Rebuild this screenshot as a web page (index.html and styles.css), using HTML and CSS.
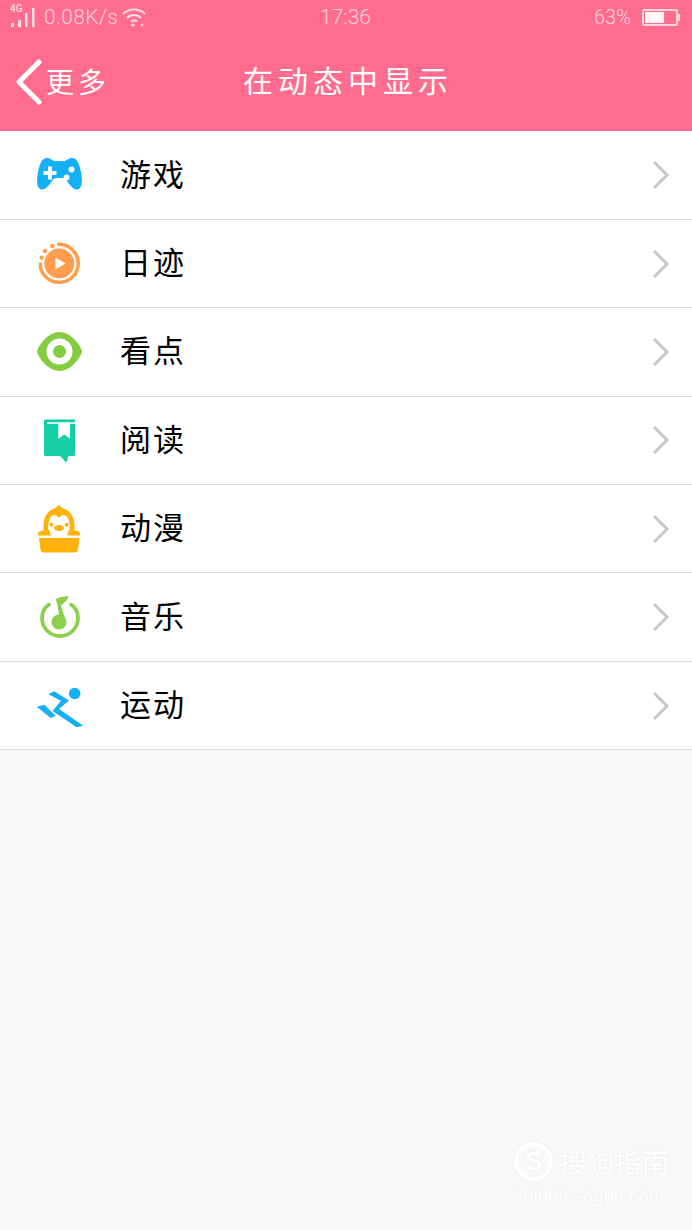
FILE: index.html
```html
<!DOCTYPE html>
<html>
  <head>
    <meta charset="utf-8">
    <title>在动态中显示</title>
    <link rel="stylesheet" href="styles.css">
  </head>
  <body>
    <header class="top">
      <div class="status">
        <div class="status-left">
          <span class="net">4G</span>
          <svg class="signal" width="25" height="19" viewBox="0 0 25 19">
            <rect x="1" y="15" width="3" height="4" fill="#ffe0e8"/>
            <rect x="8" y="12" width="3" height="7" fill="#ffe0e8"/>
            <rect x="15" y="5" width="2.500" height="14" fill="#ffe0e8"/>
            <rect x="22" y="0" width="2.500" height="19" fill="#ffe0e8"/>
          </svg>
          <span class="speed">0.08K/s</span>
          <svg class="wifi" width="24" height="20" viewBox="0 0 24 20" fill="none" stroke="#ffe0e8" stroke-width="2">
            <path d="M1 7C7 1 17 1 23 7"/>
            <path d="M5 11C9 7 15 7 19 11"/>
            <path d="M9 14.500C11 13 13 13 15 14.500"/>
            <circle cx="11" cy="18" r="1.600" fill="#ffe0e8" stroke="none"/>
            <circle cx="20" cy="18" r="1.300" fill="#ffe0e8" stroke="none"/>
          </svg>
        </div>
        <div class="clock">17:36</div>
        <div class="status-right">
          <span class="percent">63%</span>
          <div class="battery"><div class="battery-level"></div></div>
          <div class="battery-tip"></div>
        </div>
      </div>
      <div class="nav">
        <div class="back">
          <svg width="28" height="46" viewBox="0 0 28 46" fill="none" stroke="#fff" stroke-width="5" stroke-linecap="round" stroke-linejoin="round">
            <path d="M24 3L4 23L24 43"/>
          </svg>
          <span>更多</span>
        </div>
        <h1 class="title">在动态中显示</h1>
      </div>
    </header>

    <ul class="list">
      <li class="row">
        <svg class="icon" width="48" height="48" viewBox="0 0 48 48">
          <path fill="#14b0f5" d="M11 7C14 7 16 9 18 10H29C31 9 33 7 36 7C41 7 43 12 45 21C46 28 47 35 43 38C39 40 35 36 31 30C30 28 28 27 26 27H21C19 27 17 28 16 30C12 36 8 40 4 38C0 35 1 28 2 21C4 12 6 7 11 7Z"/>
          <path fill="#fff" d="M12 15.500H16V20H20.500V24H16V28.500H12V24H7.500V20H12Z"/>
          <circle cx="35.500" cy="18.500" r="3" fill="#fff"/>
          <circle cx="30.500" cy="26.500" r="3" fill="#fff"/>
        </svg>
        <span class="label">游戏</span>
        <svg class="arrow" width="18" height="30" viewBox="0 0 18 30" fill="none" stroke="#c8c8c8" stroke-width="3"><path d="M2 2L15 15L2 28"/></svg>
      </li>
      <li class="row">
        <svg class="icon" width="48" height="48" viewBox="0 0 48 48">
          <circle cx="23.300" cy="23.500" r="15" fill="#ff9d4f"/>
          <path fill="#fff" d="M19.500 17.500L29.500 23.500L19.500 29.500Z"/>
          <path fill="none" stroke="#ff9d4f" stroke-width="3.500" stroke-linecap="round" d="M22.500 4.300C33 4 42.300 12.500 42.300 23.300C42.300 34 33.800 42.300 23.300 42.300C12.800 42.300 4.300 34 4.300 24"/>
          <circle cx="16.300" cy="6" r="2.200" fill="#ff9d4f"/>
          <circle cx="9" cy="11" r="2.200" fill="#ff9d4f"/>
          <circle cx="5.700" cy="17.700" r="2.200" fill="#ff9d4f"/>
        </svg>
        <span class="label">日迹</span>
        <svg class="arrow" width="18" height="30" viewBox="0 0 18 30" fill="none" stroke="#c8c8c8" stroke-width="3"><path d="M2 2L15 15L2 28"/></svg>
      </li>
      <li class="row">
        <svg class="icon" width="48" height="48" viewBox="0 0 48 48">
          <path fill="#84cc40" d="M1 23.500C1 20 11 4 23.500 4C36 4 46 20 46 23.500C46 27 36 43 23.500 43C11 43 1 27 1 23.500Z"/>
          <circle cx="23.500" cy="23.500" r="13" fill="#fff"/>
          <circle cx="23.500" cy="23.500" r="6.500" fill="#84cc40"/>
        </svg>
        <span class="label">看点</span>
        <svg class="arrow" width="18" height="30" viewBox="0 0 18 30" fill="none" stroke="#c8c8c8" stroke-width="3"><path d="M2 2L15 15L2 28"/></svg>
      </li>
      <li class="row">
        <svg class="icon" width="48" height="48" viewBox="0 0 48 48">
          <path fill="#14cfa5" d="M9.500 3.500H39V38.500Q39 40 37.500 40H32.300L30.500 46.800L24 40H9.500Q8 40 8 38.500V5Q8 3.500 9.500 3.500Z"/>
          <path fill="#fff" d="M11 6.200H39V7.800H34V22.800L28.300 18.500L22.300 22.800V7.800H11Z"/>
        </svg>
        <span class="label">阅读</span>
        <svg class="arrow" width="18" height="30" viewBox="0 0 18 30" fill="none" stroke="#c8c8c8" stroke-width="3"><path d="M2 2L15 15L2 28"/></svg>
      </li>
      <li class="row">
        <svg class="icon" width="48" height="48" viewBox="0 0 48 48">
          <path fill="#ffb20c" d="M22.800 -0.300L26 3C33 4.500 38 11 38.500 19V28H7.500V19C8 11 13 4.500 19.500 3Z"/>
          <path fill="#fff" d="M12 31C11.500 19 13 10.500 18 10C20 10 21.500 12 23 12.500C24.500 12 26 10 28 10C33 10.500 34.500 19 34 31Z"/>
          <circle cx="15.500" cy="19.700" r="2" fill="#ffb20c"/>
          <circle cx="30.500" cy="19.700" r="2" fill="#ffb20c"/>
          <ellipse cx="23" cy="23" rx="5" ry="3" fill="#ffb20c"/>
          <path fill="#ffb20c" d="M2 30.500V28.500Q2 26.500 4.500 26L13 24.500L15 30.500ZM44 30.500V28.500Q44 26.500 41.500 26L33 24.500L31 30.500Z"/>
          <path fill="#ffb20c" d="M3 33H43.500L42 45Q41.500 47.500 39 47.500H7.500Q5 47.500 4.500 45Z"/>
        </svg>
        <span class="label">动漫</span>
        <svg class="arrow" width="18" height="30" viewBox="0 0 18 30" fill="none" stroke="#c8c8c8" stroke-width="3"><path d="M2 2L15 15L2 28"/></svg>
      </li>
      <li class="row">
        <svg class="icon" width="48" height="48" viewBox="0 0 48 48">
          <path fill="none" stroke="#8ad04a" stroke-width="3.800" stroke-linecap="round" d="M13 11.500C8.500 14.500 6 19.500 6 25C6 35 14 43 24 43C34 43 42 35 42 25C42 19.500 39.500 14.500 35 11.500"/>
          <circle cx="23" cy="29" r="7.500" fill="#8ad04a"/>
          <path fill="#8ad04a" d="M19.700 6.300C23 3.500 28 3.800 32.300 3C32 6 30.500 8 29 9C27.500 10.500 26 11.500 25 12.300L30 29H24L21.700 12.300Z"/>
        </svg>
        <span class="label">音乐</span>
        <svg class="arrow" width="18" height="30" viewBox="0 0 18 30" fill="none" stroke="#c8c8c8" stroke-width="3"><path d="M2 2L15 15L2 28"/></svg>
      </li>
      <li class="row">
        <svg class="icon" width="48" height="48" viewBox="0 0 48 48">
          <circle cx="38.700" cy="11.500" r="5.800" fill="#14b0f5"/>
          <path fill="#14b0f5" d="M12.300 12L18.300 9.300L33 18.500L23 27L47.300 43.700L40.700 45.300L16.500 29L25 19Z"/>
          <path fill="#14b0f5" d="M0.700 24.700L8.300 22.700L19.700 33.700L14.700 36Z"/>
        </svg>
        <span class="label">运动</span>
        <svg class="arrow" width="18" height="30" viewBox="0 0 18 30" fill="none" stroke="#c8c8c8" stroke-width="3"><path d="M2 2L15 15L2 28"/></svg>
      </li>
    </ul>

    <div class="mark">
      <div class="mark-top">
        <div class="mark-logo">S</div>
        <span class="mark-name">搜狗指南</span>
      </div>
      <div class="mark-url">zhinan.sogou.com</div>
    </div>
  </body>
</html>
```

FILE: styles.css
```css
* {
  box-sizing: border-box;
}

html, body {
  height: 100%;
}

body {
  position: relative;
  margin: 0;
  overflow: hidden;
  background: #f8f8fa;
  font-family: "Noto Sans CJK SC", "Noto Sans", sans-serif;
}

.top {
  height: 131px;
  background: #ff6c8e;
  color: #fff;
}

.status {
  display: grid;
  grid-template-columns: 1fr auto 1fr;
  align-items: center;
  height: 34px;
  padding: 0 12px 0 10px;
  color: #ffd3de;
  font-family: Roboto, "Liberation Sans", sans-serif;
  font-weight: 300;
  font-size: 21px;
}

.status-left {
  position: relative;
  display: flex;
  align-items: center;
}

.net {
  position: absolute;
  left: 0;
  top: -2px;
  color: #ffe0e8;
  font-size: 10px;
  font-weight: 500;
}

.speed {
  margin-left: 9px;
  letter-spacing: 0.3px;
}

.wifi {
  margin-left: 4px;
}

.clock {
  padding-left: 1px;
}

.status-right {
  display: flex;
  align-items: center;
  justify-content: flex-end;
}

.percent {
  font-size: 20px;
}

.battery {
  width: 36px;
  height: 17px;
  margin-left: 11px;
  padding: 1px;
  border: 2px solid #ffd3de;
  border-radius: 2px;
}

.battery-level {
  width: 63%;
  height: 100%;
  background: #fff6f8;
}

.battery-tip {
  width: 2px;
  height: 7px;
  background: #ffd3de;
}

.nav {
  display: grid;
  grid-template-columns: 1fr auto 1fr;
  align-items: center;
  height: 97px;
  padding-bottom: 1px;
}

.back {
  display: flex;
  align-items: center;
  padding-left: 15px;
  font-size: 28px;
  letter-spacing: 4px;
}

.back span {
  margin-left: 3px;
  padding-bottom: 3px;
}

.title {
  margin: 0;
  padding: 0 0 6px 4px;
  font-size: 30px;
  font-weight: 400;
  letter-spacing: 5px;
}

.list {
  margin: 0;
  padding: 0.5px 0 0;
  list-style: none;
  background: #fff;
}

.row {
  display: flex;
  align-items: center;
  height: 88.4px;
  padding: 0 22px 0 36px;
  border-bottom: 1px solid #dedede;
}

.icon {
  flex: none;
}

.label {
  flex: 1;
  margin-left: 36px;
  padding-bottom: 6px;
  color: #000;
  font-size: 31px;
  letter-spacing: 2px;
}

.arrow {
  flex: none;
}

/* watermark sits over the empty background */
.mark {
  position: absolute;
  right: 22px;
  bottom: 22px;
  width: 156px;
  color: #fff;
  text-shadow: 0 0 2px #e8e8ea;
}

.mark-top {
  display: flex;
  align-items: center;
}

.mark-logo {
  width: 39px;
  height: 39px;
  border: 4px solid #fff;
  border-radius: 50%;
  box-shadow: 0 0 2px #e4e4e6;
  font: bold 26px/31px "Liberation Sans", sans-serif;
  text-align: center;
}

.mark-name {
  margin-left: 6px;
  font-size: 27.5px;
  line-height: 39px;
  white-space: nowrap;
}

.mark-url {
  margin-top: 3px;
  font-family: "Liberation Sans", sans-serif;
  font-size: 18.5px;
  line-height: 24px;
  white-space: nowrap;
}
```
